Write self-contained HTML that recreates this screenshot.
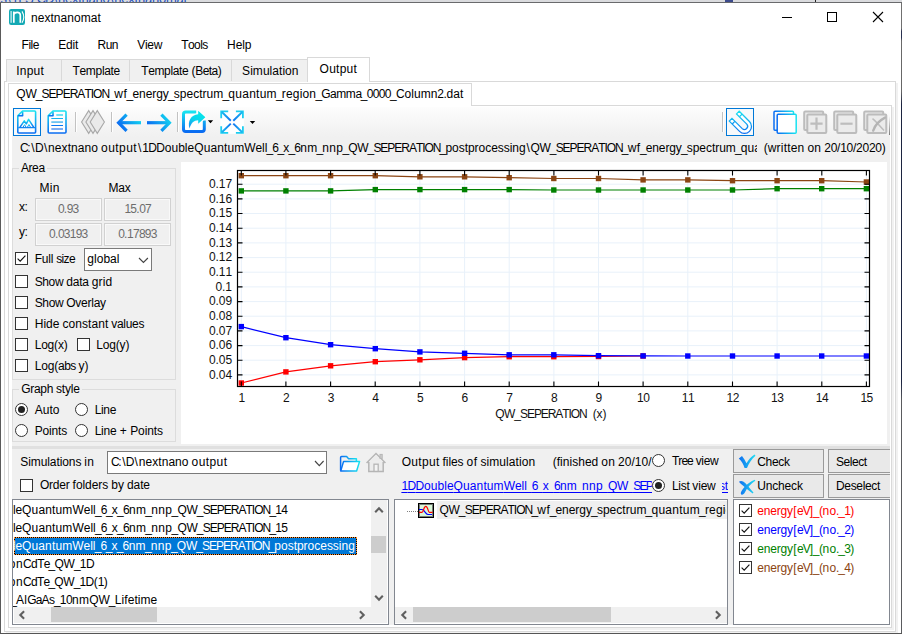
<!DOCTYPE html>
<html><head><meta charset="utf-8"><title>nextnanomat</title>
<style>
html,body{margin:0;padding:0;}
body{width:902px;height:634px;overflow:hidden;position:relative;background:#fff;font:12px "Liberation Sans", sans-serif;font-kerning:none;}
#w div,#w span.t,#w svg{position:absolute;box-sizing:border-box;}
#w{position:absolute;left:0;top:0;width:902px;height:634px;overflow:hidden;}
span.t{white-space:pre;line-height:14px;font-size:12px;color:#000;}
span.t i{font-style:normal;}
.cb{width:13px;height:13px;border:1px solid #333;background:#fff;}
.rb{width:13px;height:13px;border:1px solid #333;background:#fff;border-radius:50%;}
</style></head>
<body><div id="w">
<div style="left:0px;top:0px;width:902px;height:2px;background:#dadbde;"></div>
<div style="left:0;top:0;width:902px;height:2px;overflow:hidden">
<span class="t" style="left:-3px;top:-9.4px;color:#1a4fbf;font-size:13px;line-height:15px;"><i style="letter-spacing:-0.22px">ts</i><i style="letter-spacing:1.22px;margin:0 -0.61px 0 0.61px">\</i><i style="letter-spacing:-0.45px">1</i><i style="letter-spacing:-1.89px">PS</i><i style="letter-spacing:-2.39px;margin:0 1.20px 0 -1.20px">_</i><i style="letter-spacing:-1.15px">CD</i><i style="letter-spacing:1.22px;margin:0 -0.61px 0 0.61px">\</i><i style="letter-spacing:-0.27px">nextnano</i><i style="letter-spacing:1.22px;margin:0 -0.61px 0 0.61px">\</i><i style="letter-spacing:-0.22px">nextnanomat</i></span>
</div>
<div style="left:725px;top:0px;width:8px;height:2px;background:#3c4a8c;"></div>
<div style="left:815px;top:0px;width:1px;height:2px;background:#222;"></div>
<svg style="left:9px;top:9px" width="16" height="16" viewBox="0 0 16 16"><rect width="16" height="16" rx="2.2" fill="#14a9b4"/><rect x="1.3" y="2" width="1.7" height="11.8" fill="#fff" fill-opacity=".6"/><path d="M4.8 13.7V2.6M4.8 5.6C5.4 3 11.3 2 11.3 6.2V13.7" stroke="#fff" stroke-width="1.7" fill="none"/><path d="M13 2.4C15.4 6.4 15.4 10 13 13.8" stroke="#fff" stroke-width="1.1" fill="none"/></svg>
<span class="t" style="left:31px;top:11px;letter-spacing:0.04px;">nextnanomat</span>
<div style="left:782px;top:17px;width:10px;height:1px;background:#000;"></div>
<div style="left:827px;top:12px;width:10px;height:10px;border:1px solid #000;"></div>
<svg style="left:872px;top:11px" width="12" height="12" viewBox="0 0 12 12"><path d="M1 1l10 10M11 1L1 11" stroke="#000" stroke-width="1.1" fill="none"/></svg>
<span class="t" style="left:21.6px;top:38px;letter-spacing:-0.49px;">File</span>
<span class="t" style="left:58.3px;top:38px;letter-spacing:-0.25px;">Edit</span>
<span class="t" style="left:97.5px;top:38px;letter-spacing:-0.51px;">Run</span>
<span class="t" style="left:137.3px;top:38px;letter-spacing:-0.33px;">View</span>
<span class="t" style="left:181.2px;top:38px;letter-spacing:-0.55px;">Tools</span>
<span class="t" style="left:227.1px;top:38px;letter-spacing:-0.12px;">Help</span>
<div style="left:4px;top:81px;width:892px;height:551px;border:1px solid #d9d9d9;background:#fff;box-shadow:2px 2px 0 -0px #f1f1f1;"></div>
<div style="left:6px;top:59px;width:302px;height:23px;border:1px solid #d9d9d9;border-bottom:none;background:#f0f0f0;"></div>
<div style="left:61px;top:60px;width:1px;height:21px;background:#d9d9d9;"></div>
<div style="left:129px;top:60px;width:1px;height:21px;background:#d9d9d9;"></div>
<div style="left:231px;top:60px;width:1px;height:21px;background:#d9d9d9;"></div>
<div style="left:307px;top:57px;width:63px;height:25px;border:1px solid #d9d9d9;border-bottom:none;background:#fff;"></div>
<span class="t" style="left:16.3px;top:64px;letter-spacing:0.2px;">Input</span>
<span class="t" style="left:72.5px;top:64px;letter-spacing:-0.32px;">Template</span>
<span class="t" style="left:141.2px;top:64px;"><i style="letter-spacing:-0.36px">Template</i><i style="letter-spacing:-0.24px"> (</i><i style="letter-spacing:-0.53px">Beta</i><i style="letter-spacing:-0.07px">)</i></span>
<span class="t" style="left:242.1px;top:64px;letter-spacing:0.04px;">Simulation</span>
<span class="t" style="left:319.6px;top:62px;letter-spacing:0.23px;">Output</span>
<div style="left:8px;top:105px;width:884px;height:523px;border:1px solid #d9d9d9;background:#fff;box-shadow:2px 2px 0 0 #f1f1f1;"></div>
<div style="left:8px;top:83px;width:464px;height:23px;border:1px solid #d9d9d9;border-bottom:none;background:#fff;"></div>
<span class="t" style="left:16.3px;top:87px;"><i style="letter-spacing:-0.24px">QW</i><i style="letter-spacing:-1.64px;margin:0 0.82px 0 -0.82px">_</i><i style="letter-spacing:-0.97px">SEPERATION</i><i style="letter-spacing:-1.64px;margin:0 0.82px 0 -0.82px">_</i><i style="letter-spacing:0.56px">wf</i><i style="letter-spacing:-1.64px;margin:0 0.82px 0 -0.82px">_</i><i style="letter-spacing:-0.06px">energy</i><i style="letter-spacing:-1.64px;margin:0 0.82px 0 -0.82px">_</i><i style="letter-spacing:0.02px">spectrum</i><i style="letter-spacing:-1.64px;margin:0 0.82px 0 -0.82px">_</i><i style="letter-spacing:0.25px">quantum</i><i style="letter-spacing:-1.64px;margin:0 0.82px 0 -0.82px">_</i><i style="letter-spacing:0.16px">region</i><i style="letter-spacing:-1.64px;margin:0 0.82px 0 -0.82px">_</i><i style="letter-spacing:-0.46px">Gamma</i><i style="letter-spacing:-1.64px;margin:0 0.82px 0 -0.82px">_</i><i style="letter-spacing:-0.62px">0000</i><i style="letter-spacing:-1.64px;margin:0 0.82px 0 -0.82px">_</i><i style="letter-spacing:0.01px">Column</i><i style="letter-spacing:-0.63px">2</i><i style="letter-spacing:-0.31px">.</i><i style="letter-spacing:0.16px">dat</i></span>
<div style="left:12px;top:107px;width:878px;height:518px;background:#f0f0f0;"></div>
<div style="left:12px;top:107px;width:878px;height:30px;background:linear-gradient(#fdfdfd,#f0f0f0);"></div>
<div style="left:889px;top:108px;width:1px;height:27px;background:linear-gradient(rgba(120,120,120,0) 30%,#7d7d7d);"></div>
<svg style="left:0;top:100px" width="902" height="40" viewBox="0 100 902 40"><defs>
<linearGradient id="gv" x1="0" y1="0" x2="0" y2="1"><stop offset="0" stop-color="#19e3f0"/><stop offset="1" stop-color="#0a6cf2"/></linearGradient>
<linearGradient id="gd" x1="0" y1="1" x2="1" y2="0"><stop offset="0" stop-color="#0a5cf2"/><stop offset="1" stop-color="#12e0f0"/></linearGradient>
<linearGradient id="gh" x1="0" y1="0" x2="1" y2="0"><stop offset="0" stop-color="#0a6cf2"/><stop offset="1" stop-color="#19e3f0"/></linearGradient>
<linearGradient id="gdu" gradientUnits="userSpaceOnUse" x1="117" y1="131" x2="141" y2="114"><stop offset="0" stop-color="#0a55f2"/><stop offset="1" stop-color="#12e6f0"/></linearGradient>
<linearGradient id="gdu2" gradientUnits="userSpaceOnUse" x1="147" y1="131" x2="171" y2="114"><stop offset="0" stop-color="#0a55f2"/><stop offset="1" stop-color="#12e6f0"/></linearGradient>
</defs><rect x="13.5" y="108.5" width="27" height="27" fill="#f7f9fb" stroke="#0078d7"/><rect x="726.5" y="108.5" width="27" height="27" fill="#f7f9fb" stroke="#0078d7"/><g fill="none" stroke="url(#gv)" stroke-width="1.6" stroke-linejoin="round"><path d="M22.6 111H34.6a1 1 0 0 1 1 1V132a1 1 0 0 1 -1 1H18.8a1 1 0 0 1 -1 -1V115.8Z" fill="#fdfdfd"/><path d="M22.6 111.4V115.8H18"/><path d="M18.3 127.6H35.2" stroke="#0f86f2" stroke-width="1.3"/><path d="M20 127.2L24.3 120.8L26.3 123.8L28.6 119.4L33.6 127.2" stroke-width="1.5"/><path d="M23.2 127l1.4-2.4 1.3 2.4M27.6 127l1.3-2.6 1.5 2.6" stroke-width="1"/></g><g fill="none" stroke="url(#gv)" stroke-width="1.6" stroke-linejoin="round"><path d="M53 111H65a1 1 0 0 1 1 1V132a1 1 0 0 1 -1 1H49.2a1 1 0 0 1 -1 -1V115.8Z" fill="#fdfdfd"/><path d="M53 111.4V115.8H48.4"/></g><g fill="none"><path d="M56.3 115H63" stroke="#4fd9f0" stroke-width="1.6"/><path d="M51.3 118.5H63" stroke="#14b4f0" stroke-width="1"/><path d="M51.3 122.1H63" stroke="#6cc4f2" stroke-width="1.8"/><path d="M51.3 125.5H63" stroke="#0a78f0" stroke-width="1"/><path d="M51.3 129H63" stroke="#6ea4f2" stroke-width="1.8"/></g><path d="M75.5 112V132" stroke="#c2c2c2"/><path d="M76.5 112V132" stroke="#fff"/><path d="M111.5 112V132" stroke="#c2c2c2"/><path d="M112.5 112V132" stroke="#fff"/><path d="M177.5 112V132" stroke="#c2c2c2"/><path d="M178.5 112V132" stroke="#fff"/><path d="M722.5 112V132" stroke="#c2c2c2"/><path d="M723.5 112V132" stroke="#fff"/><path d="M88.7 110.6L95.8 122L88.7 133.4L81.60000000000001 122Z" fill="#eaeaea" stroke="#a8a8a8" stroke-width="1.1"/><path d="M93 110.6L100.1 122L93 133.4L85.9 122Z" fill="#eaeaea" stroke="#a8a8a8" stroke-width="1.1"/><path d="M97.3 110.6L104.39999999999999 122L97.3 133.4L90.2 122Z" fill="#eaeaea" stroke="#a8a8a8" stroke-width="1.1"/><g fill="none" stroke="url(#gdu)" stroke-width="3.2"><path d="M118.5 122.7H141"/><path d="M126.6 114.6L118.6 122.7L126.6 130.8" stroke-linejoin="miter"/></g><g fill="none" stroke="url(#gdu2)" stroke-width="3.2"><path d="M147 122.7H169.5"/><path d="M161.4 114.6L169.4 122.7L161.4 130.8" stroke-linejoin="miter"/></g><rect x="184.5" y="113" width="19" height="17.5" fill="#fff"/><path d="M196.2 112H185.7a2.2 2.2 0 0 0 -2.2 2.2V129.3a2.2 2.2 0 0 0 2.2 2.2H202.1a2.2 2.2 0 0 0 2.2 -2.2V120.6" fill="none" stroke="url(#gv)" stroke-width="3"/><linearGradient id="ga" gradientUnits="userSpaceOnUse" x1="189" y1="129" x2="200" y2="114"><stop offset="0" stop-color="#1a86f2"/><stop offset=".55" stop-color="#0bd2ee"/><stop offset="1" stop-color="#06e2ea"/></linearGradient><path d="M198.2 110.8L205.4 117.2L198.2 123.8V120.2C193.8 120.2 191 123 189.6 128.5C187.2 121.4 191 114.6 198.2 114.2Z" fill="url(#ga)" stroke="#fdfdfd" stroke-width="2" paint-order="stroke" stroke-linejoin="round"/><path d="M207.8 120.3h5.4l-2.7 3z" fill="#000"/><rect x="220.3" y="110.5" width="23.5" height="23.3" fill="#fff"/><g fill="none" stroke="#1ccdf0" stroke-width="1.8"><path d="M221.2 118.2V111.4H228.2"/><path d="M235.9 111.4H242.9V118.2"/><path d="M221.2 126.2V132.9H228.2"/><path d="M235.9 132.9H242.9V126.2"/></g><linearGradient id="gx" gradientUnits="userSpaceOnUse" x1="232" y1="122" x2="243" y2="122" spreadMethod="reflect"><stop offset="0" stop-color="#0f6cf2"/><stop offset="1" stop-color="#19bff0"/></linearGradient><g fill="none" stroke="url(#gx)" stroke-width="1.9"><path d="M221.6 111.8L230.8 120.7"/><path d="M242.5 111.8L233.3 120.7"/><path d="M221.6 132.5L230.8 123.6"/><path d="M242.5 132.5L233.3 123.6"/></g><path d="M249.8 121h5.4l-2.7 3z" fill="#000"/><path d="M729.30 121.10L739.55 131.35A7 7 0 0 0 749.45 121.45L739.20 111.20L736.51 113.88L746.76 124.14A3.2 3.2 0 0 1 742.24 128.66L731.98 118.41Z" fill="#fff" stroke="url(#gv)" stroke-width="1.25"/><path d="M732.20 124.00L734.88 121.31" stroke="#0f9af2" stroke-width="1.2"/><path d="M739.41 116.78L742.10 114.10" stroke="#14cdf0" stroke-width="1.2"/><g fill="none" stroke="url(#gh)" stroke-width="1.5"><rect x="774" y="111.3" width="19.5" height="19" rx="1"/><rect x="777.2" y="114.2" width="19" height="19" rx="1" fill="#fff"/></g><g transform="translate(0 0)" fill="#ebebeb" stroke="#bcbcbc" stroke-width="2"><rect x="804.2" y="111.5" width="19" height="18.5" rx="1"/><rect x="807.3" y="114.6" width="19" height="18.5" rx="1"/></g><g transform="translate(30 0)" fill="#ebebeb" stroke="#bcbcbc" stroke-width="2"><rect x="804.2" y="111.5" width="19" height="18.5" rx="1"/><rect x="807.3" y="114.6" width="19" height="18.5" rx="1"/></g><g transform="translate(60 0)" fill="#ebebeb" stroke="#bcbcbc" stroke-width="2"><rect x="804.2" y="111.5" width="19" height="18.5" rx="1"/><rect x="807.3" y="114.6" width="19" height="18.5" rx="1"/></g><path d="M810.4 123.7H822.6M816.5 117.6V129.8" stroke="#bdbdbd" stroke-width="2.2" fill="none"/><path d="M840.4 123.7H852.6" stroke="#bdbdbd" stroke-width="2.2" fill="none"/><path d="M872.5 118.6C876 121.4 880 126 884 130.6" stroke="#bdbdbd" stroke-width="1.5" fill="none"/><path d="M885 117.6C879.6 120.4 875 125 873.2 130.6" stroke="#b4b4b4" stroke-width="2.4" fill="none" stroke-linecap="round"/></svg>
<span class="t" style="left:20px;top:141px;width:737px;overflow:hidden;"><i style="letter-spacing:-1.66px">C</i><i style="letter-spacing:0.67px;margin:0 -0.34px 0 0.34px">:\</i><i style="letter-spacing:-0.66px">D</i><i style="letter-spacing:1.66px;margin:0 -0.83px 0 0.83px">\</i><i style="letter-spacing:0.08px">nextnano</i><i style="letter-spacing:-0.34px"> </i><i style="letter-spacing:0.45px">output</i><i style="letter-spacing:1.66px;margin:0 -0.83px 0 0.83px">\</i><i style="letter-spacing:-0.68px">1</i><i style="letter-spacing:-0.66px">D</i><i style="letter-spacing:0.0px">Double</i><i style="letter-spacing:0.1px">Quantum</i><i style="letter-spacing:-0.08px">Well</i><i style="letter-spacing:-1.68px;margin:0 0.84px 0 -0.84px">_</i><i style="letter-spacing:-0.68px">6</i><i style="letter-spacing:-1.68px;margin:0 0.84px 0 -0.84px">_</i><i style="letter-spacing:0.01px">x</i><i style="letter-spacing:-1.68px;margin:0 0.84px 0 -0.84px">_</i><i style="letter-spacing:-0.68px">6</i><i style="letter-spacing:0.18px">nm</i><i style="letter-spacing:-1.68px;margin:0 0.84px 0 -0.84px">_</i><i style="letter-spacing:0.33px">nnp</i><i style="letter-spacing:-1.68px;margin:0 0.84px 0 -0.84px">_</i><i style="letter-spacing:-0.32px">QW</i><i style="letter-spacing:-1.68px;margin:0 0.84px 0 -0.84px">_</i><i style="letter-spacing:-1.03px">SEPERATION</i><i style="letter-spacing:-1.68px;margin:0 0.84px 0 -0.84px">_</i><i style="letter-spacing:-0.04px">postprocessing</i><i style="letter-spacing:1.66px;margin:0 -0.83px 0 0.83px">\</i><i style="letter-spacing:-0.32px">QW</i><i style="letter-spacing:-1.68px;margin:0 0.84px 0 -0.84px">_</i><i style="letter-spacing:-1.03px">SEPERATION</i><i style="letter-spacing:-1.68px;margin:0 0.84px 0 -0.84px">_</i><i style="letter-spacing:0.51px">wf</i><i style="letter-spacing:-1.68px;margin:0 0.84px 0 -0.84px">_</i><i style="letter-spacing:-0.11px">energy</i><i style="letter-spacing:-1.68px;margin:0 0.84px 0 -0.84px">_</i><i style="letter-spacing:-0.04px">spectrum</i><i style="letter-spacing:-1.68px;margin:0 0.84px 0 -0.84px">_</i><i style="letter-spacing:-0.0px">qua</i></span>
<span class="t" style="left:763.8px;top:141px;"><i style="letter-spacing:-0.04px">(</i><i style="letter-spacing:0.19px">written</i><i style="letter-spacing:-0.37px"> </i><i style="letter-spacing:0.25px">on</i><i style="letter-spacing:-0.37px"> </i><i style="letter-spacing:-0.26px">20/10/2020</i><i style="letter-spacing:-0.04px">)</i></span>
<div style="left:12px;top:168px;width:164px;height:212px;border:1px solid #dcdcdc;"></div>
<div style="left:18.9px;top:168px;width:27.8px;height:1px;background:#f0f0f0;"></div>
<span class="t" style="left:20.9px;top:161px;letter-spacing:-0.39px;">Area</span>
<span class="t" style="left:39.4px;top:181px;letter-spacing:0.29px;">Min</span>
<span class="t" style="left:108.6px;top:181px;letter-spacing:-0.29px;">Max</span>
<div style="left:35px;top:198px;width:67px;height:23px;border:1px solid #d1d1d1;box-shadow:inset 0 0 0 1px #f9f9f9;background:#f0f0f0;"></div>
<div style="left:35px;top:223px;width:67px;height:23px;border:1px solid #d1d1d1;box-shadow:inset 0 0 0 1px #f9f9f9;background:#f0f0f0;"></div>
<div style="left:104px;top:198px;width:67px;height:23px;border:1px solid #d1d1d1;box-shadow:inset 0 0 0 1px #f9f9f9;background:#f0f0f0;"></div>
<div style="left:104px;top:223px;width:67px;height:23px;border:1px solid #d1d1d1;box-shadow:inset 0 0 0 1px #f9f9f9;background:#f0f0f0;"></div>
<span class="t" style="left:18.9px;top:200px;letter-spacing:-0.27px;">x:</span>
<span class="t" style="left:18.9px;top:225px;letter-spacing:-0.27px;">y:</span>
<span class="t" style="left:57.9px;top:202px;color:#6d6d6d;"><i style="letter-spacing:-0.83px">0</i><i style="letter-spacing:-0.42px">.</i><i style="letter-spacing:-0.82px">93</i></span>
<span class="t" style="left:124.5px;top:202px;color:#6d6d6d;"><i style="letter-spacing:-0.81px">15</i><i style="letter-spacing:-0.41px">.</i><i style="letter-spacing:-0.81px">07</i></span>
<span class="t" style="left:49px;top:227px;color:#6d6d6d;"><i style="letter-spacing:-0.76px">0</i><i style="letter-spacing:-0.38px">.</i><i style="letter-spacing:-0.75px">03193</i></span>
<span class="t" style="left:118.2px;top:227px;color:#6d6d6d;"><i style="letter-spacing:-0.76px">0</i><i style="letter-spacing:-0.38px">.</i><i style="letter-spacing:-0.75px">17893</i></span>
<div class="cb" style="left:15px;top:252px"></div>
<svg style="left:15px;top:252px" width="13" height="13" viewBox="0 0 13 13"><path d="M2.6 6.6L5.2 9.2L10.4 3.6" fill="none" stroke="#111" stroke-width="1.15"/></svg>
<span class="t" style="left:34.7px;top:252px;"><i style="letter-spacing:-0.18px">Full</i><i style="letter-spacing:-0.4px"> </i><i style="letter-spacing:-0.68px">size</i></span>
<div style="left:84px;top:248px;width:68px;height:23px;border:1px solid #7a7a7a;background:#fff;"></div>
<span class="t" style="left:87.2px;top:252px;letter-spacing:0.06px;">global</span>
<svg style="left:138.3px;top:257.2px" width="10.9" height="7.4" viewBox="-1 -1 10.9 7.4"><path d="M0 0L4.45 4.4L8.9 0" fill="none" stroke="#444" stroke-width="1.15"/></svg>
<div class="cb" style="left:15px;top:275px"></div>
<span class="t" style="left:34.7px;top:275px;"><i style="letter-spacing:-0.38px">Show</i><i style="letter-spacing:-0.39px"> </i><i style="letter-spacing:-0.18px">data</i><i style="letter-spacing:-0.39px"> </i><i style="letter-spacing:0.16px">grid</i></span>
<div class="cb" style="left:15px;top:296px"></div>
<span class="t" style="left:34.7px;top:296px;"><i style="letter-spacing:-0.35px">Show</i><i style="letter-spacing:-0.38px"> </i><i style="letter-spacing:-0.26px">Overlay</i></span>
<div class="cb" style="left:15px;top:317px"></div>
<span class="t" style="left:34.7px;top:317px;"><i style="letter-spacing:0.04px">Hide</i><i style="letter-spacing:-0.36px"> </i><i style="letter-spacing:0.05px">constant</i><i style="letter-spacing:-0.36px"> </i><i style="letter-spacing:-0.31px">values</i></span>
<div class="cb" style="left:15px;top:338px"></div>
<span class="t" style="left:34.7px;top:338px;"><i style="letter-spacing:-0.21px">Log</i><i style="letter-spacing:-0.12px">(</i><i style="letter-spacing:-0.18px">x</i><i style="letter-spacing:-0.12px">)</i></span>
<div class="cb" style="left:77px;top:338px"></div>
<span class="t" style="left:96.2px;top:338px;"><i style="letter-spacing:-0.17px">Log</i><i style="letter-spacing:-0.09px">(</i><i style="letter-spacing:-0.14px">y</i><i style="letter-spacing:-0.09px">)</i></span>
<div class="cb" style="left:15px;top:359px"></div>
<span class="t" style="left:34.7px;top:359px;"><i style="letter-spacing:-0.18px">Log</i><i style="letter-spacing:-0.1px">(</i><i style="letter-spacing:-0.61px">abs</i><i style="letter-spacing:-0.42px"> </i><i style="letter-spacing:-0.15px">y</i><i style="letter-spacing:-0.1px">)</i></span>
<div style="left:12px;top:389px;width:164px;height:53px;border:1px solid #dcdcdc;"></div>
<div style="left:19.3px;top:389px;width:62.5px;height:1px;background:#f0f0f0;"></div>
<span class="t" style="left:21.3px;top:382px;"><i style="letter-spacing:-0.33px">Graph</i><i style="letter-spacing:-0.37px"> </i><i style="letter-spacing:-0.18px">style</i></span>
<div class="rb" style="left:15px;top:403px"></div>
<div style="left:18px;top:406px;width:7px;height:7px;border-radius:50%;background:#222"></div>
<span class="t" style="left:34.7px;top:403px;letter-spacing:0.05px;">Auto</span>
<div class="rb" style="left:75px;top:403px"></div>
<span class="t" style="left:94.7px;top:403px;letter-spacing:-0.35px;">Line</span>
<div class="rb" style="left:15px;top:424px"></div>
<span class="t" style="left:34.7px;top:424px;letter-spacing:-0.18px;">Points</span>
<div class="rb" style="left:75px;top:424px"></div>
<span class="t" style="left:94.7px;top:424px;"><i style="letter-spacing:-0.24px">Line</i><i style="letter-spacing:0.04px"> + </i><i style="letter-spacing:-0.13px">Points</i></span>
<div style="left:181px;top:162px;width:706px;height:282px;background:#fff;"></div>
<svg style="left:0;top:160px" width="902" height="290" viewBox="0 160 902 290"><path d="M241.3 170.5V386.5" stroke="#e8f1fa"/><path d="M285.9 170.5V386.5" stroke="#e8f1fa"/><path d="M330.6 170.5V386.5" stroke="#e8f1fa"/><path d="M375.2 170.5V386.5" stroke="#e8f1fa"/><path d="M419.9 170.5V386.5" stroke="#e8f1fa"/><path d="M464.6 170.5V386.5" stroke="#e8f1fa"/><path d="M509.2 170.5V386.5" stroke="#e8f1fa"/><path d="M553.9 170.5V386.5" stroke="#e8f1fa"/><path d="M598.5 170.5V386.5" stroke="#e8f1fa"/><path d="M643.1 170.5V386.5" stroke="#e8f1fa"/><path d="M687.8 170.5V386.5" stroke="#e8f1fa"/><path d="M732.5 170.5V386.5" stroke="#e8f1fa"/><path d="M777.1 170.5V386.5" stroke="#e8f1fa"/><path d="M821.8 170.5V386.5" stroke="#e8f1fa"/><path d="M866.4 170.5V386.5" stroke="#e8f1fa"/><path d="M237.5 374.9H869.5" stroke="#e8f1fa"/><path d="M237.5 360.2H869.5" stroke="#e8f1fa"/><path d="M237.5 345.6H869.5" stroke="#e8f1fa"/><path d="M237.5 330.9H869.5" stroke="#e8f1fa"/><path d="M237.5 316.2H869.5" stroke="#e8f1fa"/><path d="M237.5 301.6H869.5" stroke="#e8f1fa"/><path d="M237.5 286.9H869.5" stroke="#e8f1fa"/><path d="M237.5 272.2H869.5" stroke="#e8f1fa"/><path d="M237.5 257.6H869.5" stroke="#e8f1fa"/><path d="M237.5 242.9H869.5" stroke="#e8f1fa"/><path d="M237.5 228.2H869.5" stroke="#e8f1fa"/><path d="M237.5 213.5H869.5" stroke="#e8f1fa"/><path d="M237.5 198.9H869.5" stroke="#e8f1fa"/><path d="M237.5 184.2H869.5" stroke="#e8f1fa"/><clipPath id="pc"><rect x="238" y="171" width="632" height="216"/></clipPath><g clip-path="url(#pc)"><polyline points="241.3,383.0 285.9,371.9 330.6,365.8 375.2,361.7 419.9,359.8 464.6,357.6 509.2,356.7 553.9,356.7 598.5,356.5 643.1,356.0" fill="none" stroke="#ff0000" stroke-width="1.2"/><rect x="238.6" y="380.3" width="5.4" height="5.4" fill="#ff0000"/><rect x="283.2" y="369.2" width="5.4" height="5.4" fill="#ff0000"/><rect x="327.9" y="363.1" width="5.4" height="5.4" fill="#ff0000"/><rect x="372.6" y="359.0" width="5.4" height="5.4" fill="#ff0000"/><rect x="417.2" y="357.1" width="5.4" height="5.4" fill="#ff0000"/><rect x="461.9" y="354.9" width="5.4" height="5.4" fill="#ff0000"/><rect x="506.5" y="354.0" width="5.4" height="5.4" fill="#ff0000"/><rect x="551.1" y="354.0" width="5.4" height="5.4" fill="#ff0000"/><rect x="595.8" y="353.8" width="5.4" height="5.4" fill="#ff0000"/><rect x="640.4" y="353.3" width="5.4" height="5.4" fill="#ff0000"/><polyline points="241.3,326.6 285.9,337.7 330.6,344.7 375.2,348.7 419.9,351.9 464.6,353.3 509.2,354.8 553.9,354.8 598.5,355.7 643.1,355.9 687.8,356.0 732.5,356.0 777.1,356.0 821.8,356.0 866.4,356.0" fill="none" stroke="#0000ff" stroke-width="1.2"/><rect x="238.6" y="323.9" width="5.4" height="5.4" fill="#0000ff"/><rect x="283.2" y="335.0" width="5.4" height="5.4" fill="#0000ff"/><rect x="327.9" y="342.0" width="5.4" height="5.4" fill="#0000ff"/><rect x="372.6" y="346.0" width="5.4" height="5.4" fill="#0000ff"/><rect x="417.2" y="349.2" width="5.4" height="5.4" fill="#0000ff"/><rect x="461.9" y="350.6" width="5.4" height="5.4" fill="#0000ff"/><rect x="506.5" y="352.1" width="5.4" height="5.4" fill="#0000ff"/><rect x="551.1" y="352.1" width="5.4" height="5.4" fill="#0000ff"/><rect x="595.8" y="353.0" width="5.4" height="5.4" fill="#0000ff"/><rect x="640.4" y="353.2" width="5.4" height="5.4" fill="#0000ff"/><rect x="685.1" y="353.3" width="5.4" height="5.4" fill="#0000ff"/><rect x="729.8" y="353.3" width="5.4" height="5.4" fill="#0000ff"/><rect x="774.4" y="353.3" width="5.4" height="5.4" fill="#0000ff"/><rect x="819.0" y="353.3" width="5.4" height="5.4" fill="#0000ff"/><rect x="863.7" y="353.3" width="5.4" height="5.4" fill="#0000ff"/><polyline points="241.3,190.9 285.9,190.9 330.6,190.9 375.2,189.6 419.9,189.6 464.6,189.6 509.2,189.6 553.9,190.0 598.5,190.0 643.1,190.0 687.8,190.0 732.5,190.0 777.1,188.7 821.8,188.7 866.4,188.7" fill="none" stroke="#008000" stroke-width="1.2"/><rect x="238.6" y="188.2" width="5.4" height="5.4" fill="#008000"/><rect x="283.2" y="188.2" width="5.4" height="5.4" fill="#008000"/><rect x="327.9" y="188.2" width="5.4" height="5.4" fill="#008000"/><rect x="372.6" y="186.9" width="5.4" height="5.4" fill="#008000"/><rect x="417.2" y="186.9" width="5.4" height="5.4" fill="#008000"/><rect x="461.9" y="186.9" width="5.4" height="5.4" fill="#008000"/><rect x="506.5" y="186.9" width="5.4" height="5.4" fill="#008000"/><rect x="551.1" y="187.3" width="5.4" height="5.4" fill="#008000"/><rect x="595.8" y="187.3" width="5.4" height="5.4" fill="#008000"/><rect x="640.4" y="187.3" width="5.4" height="5.4" fill="#008000"/><rect x="685.1" y="187.3" width="5.4" height="5.4" fill="#008000"/><rect x="729.8" y="187.3" width="5.4" height="5.4" fill="#008000"/><rect x="774.4" y="186.0" width="5.4" height="5.4" fill="#008000"/><rect x="819.0" y="186.0" width="5.4" height="5.4" fill="#008000"/><rect x="863.7" y="186.0" width="5.4" height="5.4" fill="#008000"/><polyline points="241.3,175.7 285.9,175.7 330.6,175.7 375.2,175.7 419.9,176.8 464.6,176.8 509.2,177.7 553.9,178.5 598.5,178.5 643.1,179.9 687.8,179.9 732.5,180.7 777.1,180.7 821.8,180.7 866.4,182.0" fill="none" stroke="#8b4513" stroke-width="1.2"/><rect x="238.6" y="173.0" width="5.4" height="5.4" fill="#8b4513"/><rect x="283.2" y="173.0" width="5.4" height="5.4" fill="#8b4513"/><rect x="327.9" y="173.0" width="5.4" height="5.4" fill="#8b4513"/><rect x="372.6" y="173.0" width="5.4" height="5.4" fill="#8b4513"/><rect x="417.2" y="174.1" width="5.4" height="5.4" fill="#8b4513"/><rect x="461.9" y="174.1" width="5.4" height="5.4" fill="#8b4513"/><rect x="506.5" y="175.0" width="5.4" height="5.4" fill="#8b4513"/><rect x="551.1" y="175.8" width="5.4" height="5.4" fill="#8b4513"/><rect x="595.8" y="175.8" width="5.4" height="5.4" fill="#8b4513"/><rect x="640.4" y="177.2" width="5.4" height="5.4" fill="#8b4513"/><rect x="685.1" y="177.2" width="5.4" height="5.4" fill="#8b4513"/><rect x="729.8" y="178.0" width="5.4" height="5.4" fill="#8b4513"/><rect x="774.4" y="178.0" width="5.4" height="5.4" fill="#8b4513"/><rect x="819.0" y="178.0" width="5.4" height="5.4" fill="#8b4513"/><rect x="863.7" y="179.3" width="5.4" height="5.4" fill="#8b4513"/></g><rect x="237.5" y="170.5" width="632.0" height="216.0" fill="none" stroke="#000" stroke-width="1.2"/><path d="M241.3 170.5v5M241.3 386.5v-5M285.9 170.5v5M285.9 386.5v-5M330.6 170.5v5M330.6 386.5v-5M375.2 170.5v5M375.2 386.5v-5M419.9 170.5v5M419.9 386.5v-5M464.6 170.5v5M464.6 386.5v-5M509.2 170.5v5M509.2 386.5v-5M553.9 170.5v5M553.9 386.5v-5M598.5 170.5v5M598.5 386.5v-5M643.1 170.5v5M643.1 386.5v-5M687.8 170.5v5M687.8 386.5v-5M732.5 170.5v5M732.5 386.5v-5M777.1 170.5v5M777.1 386.5v-5M821.8 170.5v5M821.8 386.5v-5M866.4 170.5v5M866.4 386.5v-5M237.5 374.9h5M869.5 374.9h-5M237.5 360.2h5M869.5 360.2h-5M237.5 345.6h5M869.5 345.6h-5M237.5 330.9h5M869.5 330.9h-5M237.5 316.2h5M869.5 316.2h-5M237.5 301.6h5M869.5 301.6h-5M237.5 286.9h5M869.5 286.9h-5M237.5 272.2h5M869.5 272.2h-5M237.5 257.6h5M869.5 257.6h-5M237.5 242.9h5M869.5 242.9h-5M237.5 228.2h5M869.5 228.2h-5M237.5 213.5h5M869.5 213.5h-5M237.5 198.9h5M869.5 198.9h-5M237.5 184.2h5M869.5 184.2h-5" stroke="#000" stroke-width="1.1" fill="none"/></svg>
<span class="t" style="left:208.9px;top:367.6px;color:#111;"><i style="letter-spacing:-0.09px">0</i><i style="letter-spacing:-0.04px">.</i><i style="letter-spacing:-0.08px">04</i></span>
<span class="t" style="left:208.9px;top:352.9px;color:#111;"><i style="letter-spacing:-0.09px">0</i><i style="letter-spacing:-0.04px">.</i><i style="letter-spacing:-0.08px">05</i></span>
<span class="t" style="left:208.9px;top:338.3px;color:#111;"><i style="letter-spacing:-0.09px">0</i><i style="letter-spacing:-0.04px">.</i><i style="letter-spacing:-0.08px">06</i></span>
<span class="t" style="left:208.9px;top:323.6px;color:#111;"><i style="letter-spacing:-0.09px">0</i><i style="letter-spacing:-0.04px">.</i><i style="letter-spacing:-0.08px">07</i></span>
<span class="t" style="left:208.9px;top:308.9px;color:#111;"><i style="letter-spacing:-0.09px">0</i><i style="letter-spacing:-0.04px">.</i><i style="letter-spacing:-0.08px">08</i></span>
<span class="t" style="left:208.9px;top:294.3px;color:#111;"><i style="letter-spacing:-0.09px">0</i><i style="letter-spacing:-0.04px">.</i><i style="letter-spacing:-0.08px">09</i></span>
<span class="t" style="left:215.4px;top:279.6px;color:#111;letter-spacing:-0.03px;">0.1</span>
<span class="t" style="left:208.9px;top:264.9px;color:#111;"><i style="letter-spacing:-0.09px">0</i><i style="letter-spacing:-0.04px">.</i><i style="letter-spacing:-0.08px">11</i></span>
<span class="t" style="left:208.9px;top:250.2px;color:#111;"><i style="letter-spacing:-0.09px">0</i><i style="letter-spacing:-0.04px">.</i><i style="letter-spacing:-0.08px">12</i></span>
<span class="t" style="left:208.9px;top:235.6px;color:#111;"><i style="letter-spacing:-0.09px">0</i><i style="letter-spacing:-0.04px">.</i><i style="letter-spacing:-0.08px">13</i></span>
<span class="t" style="left:208.9px;top:220.9px;color:#111;"><i style="letter-spacing:-0.09px">0</i><i style="letter-spacing:-0.04px">.</i><i style="letter-spacing:-0.08px">14</i></span>
<span class="t" style="left:208.9px;top:206.2px;color:#111;"><i style="letter-spacing:-0.09px">0</i><i style="letter-spacing:-0.04px">.</i><i style="letter-spacing:-0.08px">15</i></span>
<span class="t" style="left:208.9px;top:191.6px;color:#111;"><i style="letter-spacing:-0.09px">0</i><i style="letter-spacing:-0.04px">.</i><i style="letter-spacing:-0.08px">16</i></span>
<span class="t" style="left:208.9px;top:176.9px;color:#111;"><i style="letter-spacing:-0.09px">0</i><i style="letter-spacing:-0.04px">.</i><i style="letter-spacing:-0.08px">17</i></span>
<span class="t" style="left:238.4px;top:391px;color:#111;letter-spacing:-0.49px;">1</span>
<span class="t" style="left:283.0px;top:391px;color:#111;letter-spacing:-0.49px;">2</span>
<span class="t" style="left:327.7px;top:391px;color:#111;letter-spacing:-0.49px;">3</span>
<span class="t" style="left:372.3px;top:391px;color:#111;letter-spacing:-0.49px;">4</span>
<span class="t" style="left:417.0px;top:391px;color:#111;letter-spacing:-0.49px;">5</span>
<span class="t" style="left:461.6px;top:391px;color:#111;letter-spacing:-0.49px;">6</span>
<span class="t" style="left:506.3px;top:391px;color:#111;letter-spacing:-0.49px;">7</span>
<span class="t" style="left:551.0px;top:391px;color:#111;letter-spacing:-0.49px;">8</span>
<span class="t" style="left:595.6px;top:391px;color:#111;letter-spacing:-0.49px;">9</span>
<span class="t" style="left:637.1px;top:391px;color:#111;letter-spacing:-0.48px;">10</span>
<span class="t" style="left:681.8px;top:391px;color:#111;letter-spacing:-0.48px;">11</span>
<span class="t" style="left:726.5px;top:391px;color:#111;letter-spacing:-0.48px;">12</span>
<span class="t" style="left:771.1px;top:391px;color:#111;letter-spacing:-0.48px;">13</span>
<span class="t" style="left:815.8px;top:391px;color:#111;letter-spacing:-0.48px;">14</span>
<span class="t" style="left:860.4px;top:391px;color:#111;letter-spacing:-0.48px;">15</span>
<span class="t" style="left:495.2px;top:407px;color:#111;"><i style="letter-spacing:-0.4px">QW</i><i style="letter-spacing:-1.72px;margin:0 0.86px 0 -0.86px">_</i><i style="letter-spacing:-1.08px">SEPERATION</i><i style="letter-spacing:-0.24px">  (</i><i style="letter-spacing:-0.04px">x</i><i style="letter-spacing:-0.02px">)</i></span>
<div style="left:12px;top:446px;width:878px;height:3px;background:#e0e0e0;"></div>
<span class="t" style="left:20.3px;top:455px;"><i style="letter-spacing:-0.09px">Simulations</i><i style="letter-spacing:-0.34px"> </i><i style="letter-spacing:0.33px">in</i></span>
<div style="left:107px;top:451px;width:220px;height:23px;border:1px solid #7a7a7a;background:#fff;"></div>
<span class="t" style="left:110.9px;top:455px;"><i style="letter-spacing:-1.7px">C</i><i style="letter-spacing:0.65px;margin:0 -0.33px 0 0.33px">:\</i><i style="letter-spacing:-0.7px">D</i><i style="letter-spacing:1.64px;margin:0 -0.82px 0 0.82px">\</i><i style="letter-spacing:0.05px">nextnano</i><i style="letter-spacing:-0.35px"> </i><i style="letter-spacing:0.42px">output</i></span>
<svg style="left:313.8px;top:459.9px" width="10.6" height="7.6" viewBox="-1 -1 10.6 7.6"><path d="M0 0L4.3 4.6L8.6 0" fill="none" stroke="#444" stroke-width="1.15"/></svg>
<svg style="left:338px;top:453px" width="24" height="21" viewBox="338 453 24 21"><defs><linearGradient id="gf" x1="0" y1="0" x2="1" y2="0"><stop offset="0" stop-color="#0a6cf2"/><stop offset="1" stop-color="#19e3f0"/></linearGradient></defs><path d="M340.6 470.6V457.6a1 1 0 0 1 1 -1H346.6L348.6 458.8H356.4V461.4" fill="none" stroke="url(#gf)" stroke-width="1.5" stroke-linejoin="round"/><path d="M340.7 471L343.6 461.4H359.6L356.6 471Z" fill="#fff" stroke="url(#gf)" stroke-width="1.5" stroke-linejoin="round"/></svg>
<svg style="left:364px;top:451px" width="24" height="23" viewBox="364 451 24 23"><path d="M366.6 463L376 453.6L385.4 463" fill="none" stroke="#b5b5b5" stroke-width="1.6"/><path d="M368.8 462V471.4H383.2V462" fill="#ececec" stroke="#b5b5b5" stroke-width="1.5"/><path d="M376 454.6L368.8 461.8H383.2Z" fill="#ececec"/><rect x="374" y="464.2" width="4.2" height="7.2" fill="#f4f4f4" stroke="#b5b5b5" stroke-width="1.3"/><rect x="380" y="454.4" width="2.2" height="4" fill="#cfcfcf" stroke="#b5b5b5" stroke-width="1"/></svg>
<div class="cb" style="left:20px;top:479px"></div>
<span class="t" style="left:39.9px;top:478px;"><i style="letter-spacing:-0.19px">Order</i><i style="letter-spacing:-0.37px"> </i><i style="letter-spacing:-0.05px">folders</i><i style="letter-spacing:-0.37px"> </i><i style="letter-spacing:0.1px">by</i><i style="letter-spacing:-0.37px"> </i><i style="letter-spacing:-0.14px">date</i></span>
<div style="left:12px;top:499px;width:377px;height:126px;border:1px solid #828790;background:#fff;"></div>
<div style="left:13px;top:500px;width:358px;height:107px;overflow:hidden">
<div style="left:1px;top:37px;width:343px;height:18px;background:#000;"></div>
<div style="left:1px;top:37px;width:343px;height:18px;border:1px dotted #ff8c2a;background:#0078d7;background-clip:padding-box;"></div>
<span class="t" style="left:0px;top:3px;"><i style="letter-spacing:-0.13px">le</i><i style="letter-spacing:0.15px">Quantum</i><i style="letter-spacing:-0.04px">Well</i><i style="letter-spacing:-1.64px;margin:0 0.82px 0 -0.82px">_</i><i style="letter-spacing:-0.63px">6</i><i style="letter-spacing:-1.64px;margin:0 0.82px 0 -0.82px">_</i><i style="letter-spacing:0.05px">x</i><i style="letter-spacing:-1.64px;margin:0 0.82px 0 -0.82px">_</i><i style="letter-spacing:-0.63px">6</i><i style="letter-spacing:0.24px">nm</i><i style="letter-spacing:-1.64px;margin:0 0.82px 0 -0.82px">_</i><i style="letter-spacing:0.38px">nnp</i><i style="letter-spacing:-1.64px;margin:0 0.82px 0 -0.82px">_</i><i style="letter-spacing:-0.25px">QW</i><i style="letter-spacing:-1.64px;margin:0 0.82px 0 -0.82px">_</i><i style="letter-spacing:-0.98px">SEPERATION</i><i style="letter-spacing:-1.64px;margin:0 0.82px 0 -0.82px">_</i><i style="letter-spacing:-0.63px">14</i></span>
<span class="t" style="left:0px;top:21px;"><i style="letter-spacing:-0.13px">le</i><i style="letter-spacing:0.15px">Quantum</i><i style="letter-spacing:-0.04px">Well</i><i style="letter-spacing:-1.64px;margin:0 0.82px 0 -0.82px">_</i><i style="letter-spacing:-0.63px">6</i><i style="letter-spacing:-1.64px;margin:0 0.82px 0 -0.82px">_</i><i style="letter-spacing:0.05px">x</i><i style="letter-spacing:-1.64px;margin:0 0.82px 0 -0.82px">_</i><i style="letter-spacing:-0.63px">6</i><i style="letter-spacing:0.24px">nm</i><i style="letter-spacing:-1.64px;margin:0 0.82px 0 -0.82px">_</i><i style="letter-spacing:0.38px">nnp</i><i style="letter-spacing:-1.64px;margin:0 0.82px 0 -0.82px">_</i><i style="letter-spacing:-0.25px">QW</i><i style="letter-spacing:-1.64px;margin:0 0.82px 0 -0.82px">_</i><i style="letter-spacing:-0.98px">SEPERATION</i><i style="letter-spacing:-1.64px;margin:0 0.82px 0 -0.82px">_</i><i style="letter-spacing:-0.63px">15</i></span>
<span class="t" style="left:0px;top:39px;color:#fff;"><i style="letter-spacing:-0.15px">le</i><i style="letter-spacing:0.13px">Quantum</i><i style="letter-spacing:-0.05px">Well</i><i style="letter-spacing:-1.66px;margin:0 0.83px 0 -0.83px">_</i><i style="letter-spacing:-0.65px">6</i><i style="letter-spacing:-1.66px;margin:0 0.83px 0 -0.83px">_</i><i style="letter-spacing:0.04px">x</i><i style="letter-spacing:-1.66px;margin:0 0.83px 0 -0.83px">_</i><i style="letter-spacing:-0.65px">6</i><i style="letter-spacing:0.21px">nm</i><i style="letter-spacing:-1.66px;margin:0 0.83px 0 -0.83px">_</i><i style="letter-spacing:0.36px">nnp</i><i style="letter-spacing:-1.66px;margin:0 0.83px 0 -0.83px">_</i><i style="letter-spacing:-0.28px">QW</i><i style="letter-spacing:-1.66px;margin:0 0.83px 0 -0.83px">_</i><i style="letter-spacing:-1.0px">SEPERATION</i><i style="letter-spacing:-1.66px;margin:0 0.83px 0 -0.83px">_</i><i style="letter-spacing:-0.02px">postprocessing</i></span>
<span class="t" style="left:-4.2px;top:57px;"><i style="letter-spacing:0.42px">on</i><i style="letter-spacing:-0.57px">Cd</i><i style="letter-spacing:-0.92px">Te</i><i style="letter-spacing:-1.62px;margin:0 0.81px 0 -0.81px">_</i><i style="letter-spacing:-0.19px">QW</i><i style="letter-spacing:-1.62px;margin:0 0.81px 0 -0.81px">_</i><i style="letter-spacing:-0.6px">1</i><i style="letter-spacing:-0.56px">D</i></span>
<span class="t" style="left:-4.2px;top:75px;"><i style="letter-spacing:0.39px">on</i><i style="letter-spacing:-0.6px">Cd</i><i style="letter-spacing:-0.95px">Te</i><i style="letter-spacing:-1.64px;margin:0 0.82px 0 -0.82px">_</i><i style="letter-spacing:-0.23px">QW</i><i style="letter-spacing:-1.64px;margin:0 0.82px 0 -0.82px">_</i><i style="letter-spacing:-0.63px">1</i><i style="letter-spacing:-0.59px">D</i><i style="letter-spacing:0.04px">(</i><i style="letter-spacing:-0.63px">1</i><i style="letter-spacing:0.04px">)</i></span>
<span class="t" style="left:-2px;top:93px;"><i style="letter-spacing:-1.6px;margin:0 0.80px 0 -0.80px">_</i><i style="letter-spacing:0.26px">Al</i><i style="letter-spacing:-0.89px">Ga</i><i style="letter-spacing:-0.4px">As</i><i style="letter-spacing:-1.6px;margin:0 0.80px 0 -0.80px">_</i><i style="letter-spacing:-0.58px">10</i><i style="letter-spacing:0.31px">nm</i><i style="letter-spacing:-0.17px">QW</i><i style="letter-spacing:-1.6px;margin:0 0.80px 0 -0.80px">_</i><i style="letter-spacing:0.08px">Lifetime</i></span>
</div>
<div style="left:371px;top:500px;width:16px;height:123px;background:#f0f0f0;"></div>
<div style="left:371px;top:536px;width:15px;height:17px;background:#cdcdcd;"></div>
<svg style="left:372.5px;top:504.3px" width="12" height="12" viewBox="-6 -6 12 12"><path d="M-3.8 2.2L0 -1.7L3.8 2.2" fill="none" stroke="#606060" stroke-width="2.1"/></svg>
<svg style="left:372.5px;top:592px" width="12" height="12" viewBox="-6 -6 12 12"><path d="M-3.8 -2.2L0 1.7L3.8 -2.2" fill="none" stroke="#606060" stroke-width="2.1"/></svg>
<div style="left:14px;top:607px;width:357px;height:16px;background:#f0f0f0;"></div>
<div style="left:51px;top:607px;width:106px;height:15px;background:#cdcdcd;"></div>
<svg style="left:16px;top:608.8px" width="12" height="12" viewBox="-6 -6 12 12"><path d="M2.1 -3.7L-1.7 0L2.1 3.7" fill="none" stroke="#606060" stroke-width="2.1"/></svg>
<svg style="left:355.8px;top:608.8px" width="12" height="12" viewBox="-6 -6 12 12"><path d="M-2.1 -3.7L1.7 0L-2.1 3.7" fill="none" stroke="#606060" stroke-width="2.1"/></svg>
<span class="t" style="left:401.7px;top:455px;"><i style="letter-spacing:0.31px">Output</i><i style="letter-spacing:-0.35px"> </i><i style="letter-spacing:-0.08px">files</i><i style="letter-spacing:-0.35px"> </i><i style="letter-spacing:0.48px">of</i><i style="letter-spacing:-0.35px"> </i><i style="letter-spacing:0.08px">simulation</i></span>
<span class="t" style="left:552.8px;top:455px;"><i style="letter-spacing:-0.04px">(</i><i style="letter-spacing:0.02px">finished</i><i style="letter-spacing:-0.38px"> </i><i style="letter-spacing:0.24px">on</i><i style="letter-spacing:-0.38px"> </i><i style="letter-spacing:0.04px">20/10/</i></span>
<span class="t" style="left:401.4px;top:479px;color:#0000ff;width:251px;overflow:hidden;text-decoration:underline;text-underline-offset:1.5px;"><i style="letter-spacing:-0.67px">1</i><i style="letter-spacing:-0.65px">D</i><i style="letter-spacing:0.02px">Double</i><i style="letter-spacing:0.11px">Quantum</i><i style="letter-spacing:-0.07px">Well</i><i style="letter-spacing:-1.67px;margin:0 0.83px 0 -0.83px">_</i><i style="letter-spacing:-0.67px">6</i><i style="letter-spacing:-1.67px;margin:0 0.83px 0 -0.83px">_</i><i style="letter-spacing:0.02px">x</i><i style="letter-spacing:-1.67px;margin:0 0.83px 0 -0.83px">_</i><i style="letter-spacing:-0.67px">6</i><i style="letter-spacing:0.19px">nm</i><i style="letter-spacing:-1.67px;margin:0 0.83px 0 -0.83px">_</i><i style="letter-spacing:0.35px">nnp</i><i style="letter-spacing:-1.67px;margin:0 0.83px 0 -0.83px">_</i><i style="letter-spacing:-0.3px">QW</i><i style="letter-spacing:-1.67px;margin:0 0.83px 0 -0.83px">_</i><i style="letter-spacing:-1.65px">SEP</i></span>
<div style="left:722px;top:476px;width:6px;height:18px;overflow:hidden">
<span class="t" style="left:-3px;top:3px;color:#0000ff;letter-spacing:-0.17px;text-decoration:underline;text-underline-offset:1.5px;">st</span>
</div>
<div class="rb" style="left:652px;top:454px"></div>
<span class="t" style="left:672px;top:454px;"><i style="letter-spacing:-0.96px">Tree</i><i style="letter-spacing:-0.5px"> </i><i style="letter-spacing:-0.32px">view</i></span>
<div class="rb" style="left:652px;top:479px"></div>
<div style="left:655px;top:482px;width:7px;height:7px;border-radius:50%;background:#222"></div>
<span class="t" style="left:672px;top:479px;"><i style="letter-spacing:-0.31px">List</i><i style="letter-spacing:-0.44px"> </i><i style="letter-spacing:-0.19px">view</i></span>
<div style="left:394px;top:499px;width:334px;height:126px;border:1px solid #828790;background:#fff;"></div>
<div style="left:407px;top:511px;width:11px;height:1px;background:repeating-linear-gradient(90deg,#808080 0 1px,transparent 1px 2px);"></div>
<div style="left:437px;top:501px;width:290px;height:18px;background:#efefef;"></div>
<div style="left:395px;top:500px;width:331px;height:107px;overflow:hidden">
<span class="t" style="left:44.4px;top:3px;"><i style="letter-spacing:-0.24px">QW</i><i style="letter-spacing:-1.64px;margin:0 0.82px 0 -0.82px">_</i><i style="letter-spacing:-0.97px">SEPERATION</i><i style="letter-spacing:-1.64px;margin:0 0.82px 0 -0.82px">_</i><i style="letter-spacing:0.56px">wf</i><i style="letter-spacing:-1.64px;margin:0 0.82px 0 -0.82px">_</i><i style="letter-spacing:-0.06px">energy</i><i style="letter-spacing:-1.64px;margin:0 0.82px 0 -0.82px">_</i><i style="letter-spacing:0.02px">spectrum</i><i style="letter-spacing:-1.64px;margin:0 0.82px 0 -0.82px">_</i><i style="letter-spacing:0.25px">quantum</i><i style="letter-spacing:-1.64px;margin:0 0.82px 0 -0.82px">_</i><i style="letter-spacing:0.16px">region</i><i style="letter-spacing:-1.64px;margin:0 0.82px 0 -0.82px">_</i><i style="letter-spacing:-0.46px">Gamma</i><i style="letter-spacing:-1.64px;margin:0 0.82px 0 -0.82px">_</i><i style="letter-spacing:-0.62px">0000</i><i style="letter-spacing:-1.64px;margin:0 0.82px 0 -0.82px">_</i><i style="letter-spacing:0.01px">Column</i><i style="letter-spacing:-0.63px">2</i><i style="letter-spacing:-0.31px">.</i><i style="letter-spacing:0.16px">dat</i></span>
</div>
<svg style="left:418px;top:503px" width="16" height="15" viewBox="0 0 16 15"><rect x="0.5" y="0.5" width="15" height="14" fill="#fff" stroke="#000"/><rect x="1.5" y="1.5" width="13" height="12" fill="#d9f7d9" stroke="#000" stroke-dasharray="1 1"/><path d="M1 6.5H4C5.5 6.5 6 7.5 7 9S8.5 11.5 10 11.5H14" fill="none" stroke="#0000ff" stroke-width="1.2"/><path d="M1 9.4H4C5.6 9.4 5.6 3.4 7.8 3.4S10 9.4 11.4 9.4H14.6" fill="none" stroke="#ff0000" stroke-width="1.2"/></svg>
<div style="left:395px;top:607px;width:332px;height:16px;background:#f0f0f0;"></div>
<div style="left:413px;top:607px;width:198px;height:15px;background:#cdcdcd;"></div>
<svg style="left:398px;top:608.8px" width="12" height="12" viewBox="-6 -6 12 12"><path d="M2.1 -3.7L-1.7 0L2.1 3.7" fill="none" stroke="#606060" stroke-width="2.1"/></svg>
<svg style="left:711.5px;top:608.8px" width="12" height="12" viewBox="-6 -6 12 12"><path d="M-2.1 -3.7L1.7 0L-2.1 3.7" fill="none" stroke="#606060" stroke-width="2.1"/></svg>
<div style="left:728px;top:446px;width:162px;height:180px;overflow:hidden">
<div style="left:5px;top:3px;width:91px;height:24px;border:1px solid #9a9a9a;background:#e9e9e9;"></div>
<div style="left:5px;top:28px;width:91px;height:24px;border:1px solid #9a9a9a;background:#e9e9e9;"></div>
<div style="left:100px;top:3px;width:80px;height:24px;border:1px solid #9a9a9a;background:#e9e9e9;"></div>
<div style="left:100px;top:28px;width:80px;height:24px;border:1px solid #9a9a9a;background:#e9e9e9;"></div>
</div>
<span class="t" style="left:757.3px;top:455px;letter-spacing:-0.34px;">Check</span>
<span class="t" style="left:757.3px;top:479px;letter-spacing:-0.18px;">Uncheck</span>
<span class="t" style="left:836px;top:455px;letter-spacing:-0.46px;">Select</span>
<span class="t" style="left:836px;top:479px;letter-spacing:-0.34px;">Deselect</span>
<svg style="left:737px;top:452px" width="20" height="44" viewBox="737 452 20 44"><defs><linearGradient id="gc" gradientUnits="userSpaceOnUse" x1="739" y1="0" x2="755" y2="0"><stop offset="0" stop-color="#0f6cf0"/><stop offset="1" stop-color="#1fdcf2"/></linearGradient></defs><path d="M738.8 458.6L742 456C743.8 458.2 745.3 460.6 746.5 463.2C748.5 459.8 751.2 456.8 754.6 454.6L755.5 455.7C751.9 459 748.9 463 747 468L744.6 468C743.4 464.3 741.6 461.3 738.8 458.6Z" fill="url(#gc)"/><path d="M754.9 479.7C749.8 481.6 745 485.8 742.2 490.1C741.1 491.8 740.2 493.8 741.3 494.6C742.6 495.3 744.1 494 745 492.3C747 487.9 750.7 483.5 755.3 480.7Z" fill="url(#gc)"/><path d="M739 481.8C740.6 480.2 743.2 481 745.2 483C748 486 750.8 489.6 753.5 492.5L752.7 493.5C749.5 491 746.1 488.3 743.2 485.7C741.6 484.3 739.8 483.2 739 481.8Z" fill="url(#gc)"/></svg>
<div style="left:733px;top:499px;width:157px;height:126px;border:1px solid #828790;background:#fff;"></div>
<div class="cb" style="left:739px;top:504px"></div>
<svg style="left:739px;top:504px" width="13" height="13" viewBox="0 0 13 13"><path d="M2.6 6.6L5.2 9.2L10.4 3.6" fill="none" stroke="#111" stroke-width="1.15"/></svg>
<span class="t" style="left:757.3px;top:504px;color:#ff0000;"><i style="letter-spacing:-0.18px">energy</i><i style="letter-spacing:0.61px;margin:0 -0.30px 0 0.30px">[</i><i style="letter-spacing:-0.75px">e</i><i style="letter-spacing:-1.09px">V</i><i style="letter-spacing:-0.39px">]_(</i><i style="letter-spacing:0.24px">no</i><i style="letter-spacing:-1.05px;margin:0 0.53px 0 -0.53px">._</i><i style="letter-spacing:-0.75px">1</i><i style="letter-spacing:-0.04px">)</i></span>
<div class="cb" style="left:739px;top:523px"></div>
<svg style="left:739px;top:523px" width="13" height="13" viewBox="0 0 13 13"><path d="M2.6 6.6L5.2 9.2L10.4 3.6" fill="none" stroke="#111" stroke-width="1.15"/></svg>
<span class="t" style="left:757.3px;top:523px;color:#0000ff;"><i style="letter-spacing:-0.18px">energy</i><i style="letter-spacing:0.61px;margin:0 -0.30px 0 0.30px">[</i><i style="letter-spacing:-0.75px">e</i><i style="letter-spacing:-1.09px">V</i><i style="letter-spacing:-0.39px">]_(</i><i style="letter-spacing:0.24px">no</i><i style="letter-spacing:-1.05px;margin:0 0.53px 0 -0.53px">._</i><i style="letter-spacing:-0.75px">2</i><i style="letter-spacing:-0.04px">)</i></span>
<div class="cb" style="left:739px;top:542px"></div>
<svg style="left:739px;top:542px" width="13" height="13" viewBox="0 0 13 13"><path d="M2.6 6.6L5.2 9.2L10.4 3.6" fill="none" stroke="#111" stroke-width="1.15"/></svg>
<span class="t" style="left:757.3px;top:542px;color:#008000;"><i style="letter-spacing:-0.18px">energy</i><i style="letter-spacing:0.61px;margin:0 -0.30px 0 0.30px">[</i><i style="letter-spacing:-0.75px">e</i><i style="letter-spacing:-1.09px">V</i><i style="letter-spacing:-0.39px">]_(</i><i style="letter-spacing:0.24px">no</i><i style="letter-spacing:-1.05px;margin:0 0.53px 0 -0.53px">._</i><i style="letter-spacing:-0.75px">3</i><i style="letter-spacing:-0.04px">)</i></span>
<div class="cb" style="left:739px;top:561px"></div>
<svg style="left:739px;top:561px" width="13" height="13" viewBox="0 0 13 13"><path d="M2.6 6.6L5.2 9.2L10.4 3.6" fill="none" stroke="#111" stroke-width="1.15"/></svg>
<span class="t" style="left:757.3px;top:561px;color:#8b4513;"><i style="letter-spacing:-0.18px">energy</i><i style="letter-spacing:0.61px;margin:0 -0.30px 0 0.30px">[</i><i style="letter-spacing:-0.75px">e</i><i style="letter-spacing:-1.09px">V</i><i style="letter-spacing:-0.39px">]_(</i><i style="letter-spacing:0.24px">no</i><i style="letter-spacing:-1.05px;margin:0 0.53px 0 -0.53px">._</i><i style="letter-spacing:-0.75px">4</i><i style="letter-spacing:-0.04px">)</i></span>
<div style="left:0px;top:2px;width:902px;height:1px;background:#696a6c;"></div>
<div style="left:0px;top:3px;width:1px;height:631px;background:#5a5a5a;"></div>
<div style="left:901px;top:3px;width:1px;height:631px;background:linear-gradient(#707070 0,#707070 4%,#2a3150 4.5%,#2a3150 5.5%,#6a6a6a 6%,#666 14%,#1c2440 16%,#1c2440 60%,#5a5b5e 63%);"></div>
<div style="left:0px;top:633px;width:902px;height:1px;background:#555;"></div>
</div></body></html>
